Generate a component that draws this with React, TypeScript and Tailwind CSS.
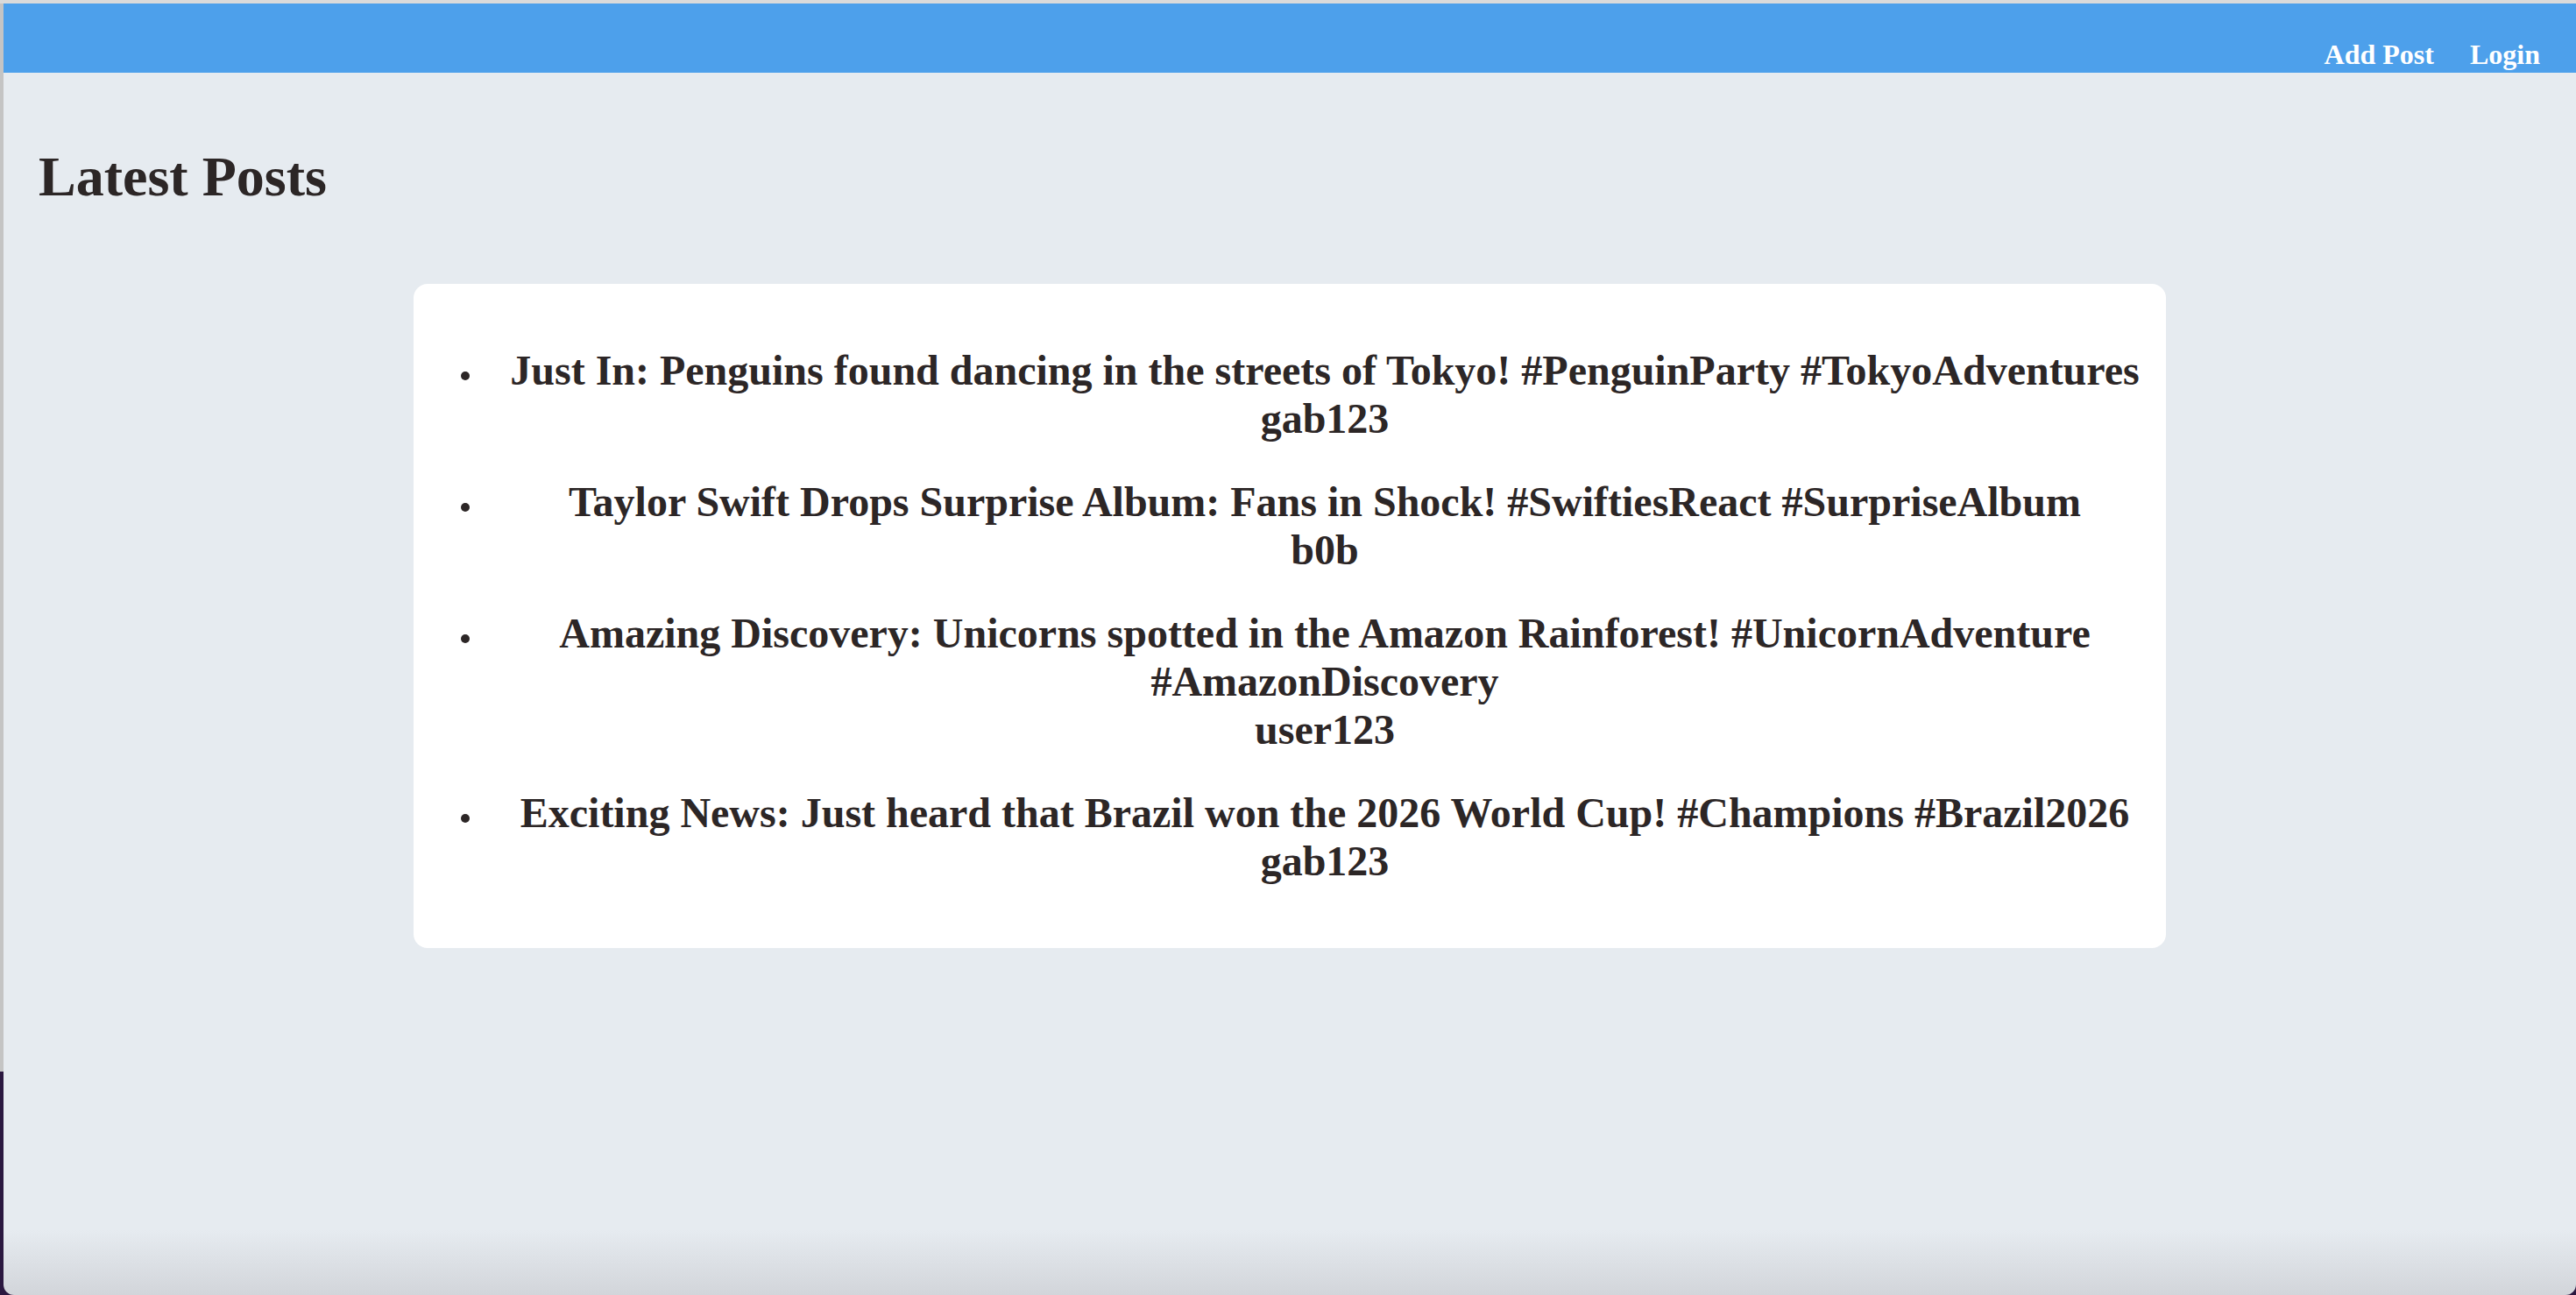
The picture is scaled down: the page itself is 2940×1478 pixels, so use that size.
const posts = [
  {
    id: 1,
    content: "Just In: Penguins found dancing in the streets of Tokyo! #PenguinParty #TokyoAdventures",
    user: "gab123",
  },
  {
    id: 2,
    content: "Taylor Swift Drops Surprise Album: Fans in Shock! #SwiftiesReact #SurpriseAlbum",
    user: "b0b",
  },
  {
    id: 3,
    content: "Amazing Discovery: Unicorns spotted in the Amazon Rainforest! #UnicornAdventure #AmazonDiscovery",
    user: "user123",
  },
  {
    id: 4,
    content: "Exciting News: Just heard that Brazil won the 2026 World Cup! #Champions #Brazil2026",
    user: "gab123",
  },
];

const Navbar = () => {
  return (
    <nav className="h-[79px] bg-[#4da0eb] flex justify-end items-start pt-[40px] pr-[41px] gap-[41px]">
      <a href="#" className="text-white text-[32px] leading-[37px] font-bold">Add Post</a>
      <a href="#" className="text-white text-[32px] leading-[37px] font-bold">Login</a>
    </nav>
  );
};

const App = () => {
  return (
    <div className="h-screen w-full bg-[#2b1840] flex flex-col font-['Liberation_Serif','Times_New_Roman',serif] text-[#2c2626]">
      <div className="h-[4px] bg-[#dadada] shrink-0" />
      <div className="flex flex-1 min-h-0">
        {/* window edge */}
        <div className="w-[4px] h-[1219px] bg-[#c4c4c4] shrink-0" />
        <div className="flex-1 flex flex-col rounded-b-[12px] bg-[linear-gradient(to_bottom,#e6ebf0_0px,#e6ebf0_1400px,#d2d5da_1474px)]">
          <Navbar />

          <h1 className="mt-[82px] ml-[40px] text-[64px] leading-[74px] font-bold">Latest Posts</h1>

          <div className="mt-[85px] mx-auto w-[2000px] bg-white rounded-[16px] pl-[32px] pr-[22px] pt-[71px] pb-[72px]">
            <ul className="pl-[70px] flex flex-col gap-[40px]">
              {posts.map((post) => (
                <li key={post.id} className="flex items-start">
                  <span className="w-[10px] h-[10px] rounded-full bg-[#2c2626] shrink-0 ml-[-48px] mr-[38px] mt-[29px]" />
                  <h2 className="flex-1 text-center text-[48px] leading-[55px] font-bold">
                    {post.content}
                    <br />
                    {post.user}
                  </h2>
                </li>
              ))}
            </ul>
          </div>
        </div>
      </div>
    </div>
  );
};

export default App;
